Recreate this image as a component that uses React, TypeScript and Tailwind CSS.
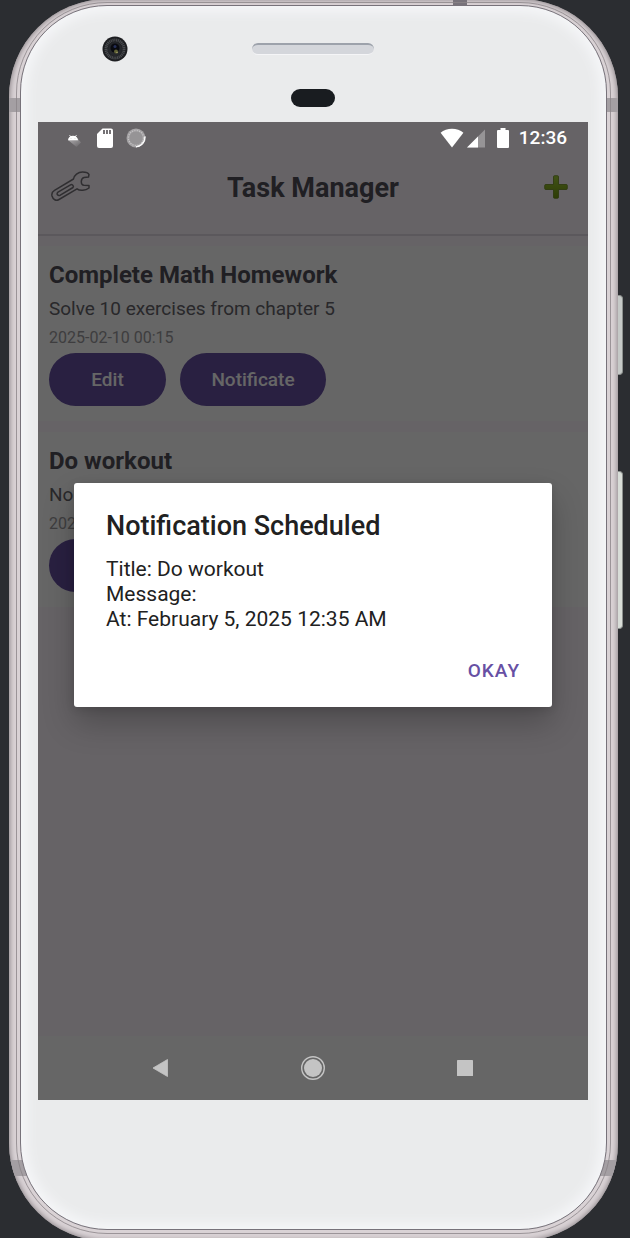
import React from "react";

type Task = { title: string; description: string; due: string };

const tasks: Task[] = [
  { title: "Complete Math Homework", description: "Solve 10 exercises from chapter 5", due: "2025-02-10 00:15" },
  { title: "Do workout", description: "No description", due: "2025-02-05 00:35" },
];

function Camera() {
  return (
    <svg viewBox="0 0 26 26" className="size-[26px]" aria-hidden="true">
      <circle cx="13" cy="13" r="12.5" fill="#1d1e21" />
      <circle cx="13" cy="13" r="9" fill="none" stroke="#4a4c50" strokeWidth="3" strokeDasharray="1.2 0.6" />
      <circle cx="13" cy="13" r="7.2" fill="#25272b" />
      <circle cx="13" cy="12" r="4.5" fill="#090a10" />
      <circle cx="13" cy="10.5" r="1.5" fill="#26305a" />
      <circle cx="14" cy="15.5" r="2" fill="#5f6035" />
      <circle cx="15" cy="16.5" r="0.8" fill="#a5a06a" />
    </svg>
  );
}

function StatusBar() {
  return (
    <div className="relative z-20 flex h-8 items-center justify-between pl-7 pr-[21px] text-white">
      <div className="flex items-center gap-4">
        <svg viewBox="0 0 15 20" className="h-5 w-[15px]" aria-hidden="true">
          <defs>
            <linearGradient id="robotShade" x1="0" y1="0" x2="1" y2="1">
              <stop offset="0" stopColor="#b0aeb0" />
              <stop offset="1" stopColor="#666366" />
            </linearGradient>
          </defs>
          <path d="M2 12L12 11L15 14.500L10.500 19Z" fill="url(#robotShade)" />
          <path d="M2 12.300a5 4.600 0 0 1 10 0Z" fill="#fff" />
          <path d="M3.500 7l1.300 2M10.500 7L9.200 9" stroke="#fff" strokeWidth="0.8" />
          <circle cx="5" cy="10.6" r="0.4" fill="#999" />
          <circle cx="9" cy="10.6" r="0.4" fill="#999" />
        </svg>
        <svg viewBox="0 0 16 20" className="h-5 w-4" aria-hidden="true">
          <path d="M5.5 0.5H14a2 2 0 0 1 2 2V18a2 2 0 0 1-2 2H2a2 2 0 0 1-2-2V6Z" fill="#fff" />
          <path d="M7 2v4M10 2v4M13 2v4" stroke="#666366" strokeWidth="1.8" />
        </svg>
        <svg viewBox="0 0 20 20" className="-ml-[3px] size-5" aria-hidden="true">
          <circle cx="10" cy="10" r="9.5" fill="#a5a3a5" />
          <path d="M19 8.500a9.200 9.200 0 0 1-9 10.400 12 12 0 0 0 9-10.400Z" fill="#fff" stroke="#fff" strokeWidth="1" />
          <circle cx="10" cy="10" r="7.5" fill="none" stroke="#cccacc" strokeWidth="1.4" strokeDasharray="0.8 1.6" />
          <circle cx="10" cy="10" r="6.6" fill="#969496" />
        </svg>
      </div>
      <div className="flex items-center">
        <svg viewBox="0 0 24 20" className="h-5 w-6" aria-hidden="true">
          <path d="M12 19.5L0.6 4.7C3.6 2 7.6 0.7 12 0.7S20.4 2 23.4 4.7Z" fill="#fff" />
        </svg>
        <svg viewBox="0 0 18 20" className="ml-[3px] h-5 w-[18px]" aria-hidden="true">
          <path d="M0 19.5L18 1.5V19.5Z" fill="#969496" />
          <path d="M0 19.5L11 8.5V19.5Z" fill="#fff" />
        </svg>
        <svg viewBox="0 0 12 20" className="ml-3 h-5 w-3" aria-hidden="true">
          <path d="M3.5 0h5v2H11a1 1 0 0 1 1 1V19a1 1 0 0 1-1 1H1a1 1 0 0 1-1-1V3a1 1 0 0 1 1-1h2.5Z" fill="#fff" />
        </svg>
        <span className="ml-2.5 text-[19px] leading-6 font-medium">12:36</span>
      </div>
    </div>
  );
}

function Header() {
  return (
    <header className="flex h-[82px] items-start justify-between border-b-2 border-[#e4dde6] px-[13px] pt-[13px]">
      <button type="button" aria-label="Settings" className="flex h-10 w-12 items-center">
        <svg viewBox="0 0 40 32" className="h-8 w-10" fill="none" stroke="#77747a" strokeWidth="1.5" strokeLinejoin="round" strokeLinecap="round">
          <path d="M22.5 8C23 4.500 27 1 31.5 1 34.5 1 37.500 2.2 38 3.500L37.5 6 33 6.5C30.5 7 30.5 8.5 30.3 10.5 30.3 13 31 14.2 33 14.3L38 14.4 38 17C34.5 19.5 29 20.3 26 17.8L8 28.5C5 30.3 2 28.5 1 25 0.3 22 1 20.800 3.5 19.3Z" />
          <path d="M7 21.2L19.5 13.8C21 13 23.3 14.8 22 16.5L9.3 24.2C7 25.3 4.8 23 7 21.2Z" />
        </svg>
      </button>
      <h1 className="pt-[5px] text-[27px] leading-8 font-bold text-[#504f57]">Task Manager</h1>
      <button type="button" aria-label="Add task" className="flex h-10 w-12 items-center justify-end pr-[7px]">
        <svg viewBox="0 0 24 24" className="size-6">
          <defs>
            <linearGradient id="plusFill" x1="0" y1="0" x2="0" y2="1">
              <stop offset="0" stopColor="#a3cf3a" />
              <stop offset="1" stopColor="#72980f" />
            </linearGradient>
          </defs>
          <path d="M10.500 0.700h3a1 1 0 0 1 1 1V9.500h7.800a1 1 0 0 1 1 1v3a1 1 0 0 1-1 1H14.500v7.800a1 1 0 0 1-1 1h-3a1 1 0 0 1-1-1V14.500H1.700a1 1 0 0 1-1-1v-3a1 1 0 0 1 1-1H9.500V1.700a1 1 0 0 1 1-1Z" fill="url(#plusFill)" stroke="#6c8c1e" strokeWidth="0.8" />
        </svg>
      </button>
    </header>
  );
}

function TaskCard({ task }: { task: Task }) {
  return (
    <li className="bg-white px-[11px] pt-3 pb-[15px]">
      <h2 className="text-2xl leading-[34px] font-bold text-[#504f57]">{task.title}</h2>
      <p className="text-[19px] leading-[34px] text-[#66656b]">{task.description}</p>
      <p className="text-base leading-6 text-[#9b9a9d]">{task.due}</p>
      <div className="mt-[3px] flex gap-[14px]">
        <button type="button" className="h-[53px] w-[117px] rounded-[27px] bg-[#6750a4] pt-0.5 text-[19px] font-medium text-white">Edit</button>
        <button type="button" className="h-[53px] w-[146px] rounded-[27px] bg-[#6750a4] pt-0.5 text-[19px] font-medium text-white">Notificate</button>
      </div>
    </li>
  );
}

function NavBar() {
  return (
    <nav className="flex h-16 items-center justify-between bg-white px-[110px]">
      <button type="button" aria-label="Back" className="relative z-20 flex w-6 justify-center">
        <svg viewBox="0 0 24 24" className="size-6"><path d="M5 12L19.500 3.500V20.500Z" fill="#c4c4c4" stroke="#c4c4c4" strokeWidth="0.8" strokeLinejoin="round" /></svg>
      </button>
      <button type="button" aria-label="Home" className="relative z-20 flex w-6 justify-center">
        <svg viewBox="0 0 24 24" className="size-6"><circle cx="12" cy="12" r="11.300" fill="none" stroke="#c4c4c4" strokeWidth="1.400" /><circle cx="12" cy="12" r="9" fill="#c4c4c4" /></svg>
      </button>
      <button type="button" aria-label="Recent apps" className="relative z-20 flex w-6 justify-center">
        <svg viewBox="0 0 24 24" className="size-6"><rect x="3" y="4" width="16" height="16" rx="0.600" fill="#c4c4c4" /></svg>
      </button>
    </nav>
  );
}

function ScheduledDialog() {
  return (
    <div className="absolute inset-0 z-10 flex items-center bg-black/60 px-9 pb-8">
      <div role="alertdialog" aria-labelledby="dialog-title" className="w-full rounded-[3px] bg-white px-8 pt-[25px] pb-[18px] text-[#212121] shadow-[0_16px_32px_rgba(0,0,0,0.24),0_2px_8px_rgba(0,0,0,0.12)]">
        <h2 id="dialog-title" className="text-[27px] leading-9 font-medium">Notification Scheduled</h2>
        <p className="mt-[13px] text-[21px] leading-[25px]">
          Title: Do workout<br />Message:<br />At: February 5, 2025 12:35 AM
        </p>
        <div className="mt-[21px] flex justify-end">
          <button type="button" className="h-9 text-[19px] font-medium tracking-[1px] text-[#6750a4]">OKAY</button>
        </div>
      </div>
    </div>
  );
}

export default function App() {
  return (
    <div className="flex min-h-screen flex-col overflow-hidden bg-[#2b2d31] pr-3 pl-[9px] font-[Roboto,sans-serif]">
      <div className="relative -mt-px -mb-[3px] flex flex-1 flex-col rounded-[98px] bg-[#d9d2d5] p-[7px] shadow-[inset_0_0_5px_1px_#8f888c]">
        <div className="absolute top-[296px] -right-[5px] h-20 w-[5px] rounded-r-sm border border-l-0 border-[#8c908e] bg-[#c5c9c7]" />
        <div className="absolute top-[472px] -right-[5px] h-[158px] w-[5px] rounded-r-sm border border-l-0 border-[#8c908e] bg-[#d8ddd8]" />
        <div className="absolute inset-0 overflow-hidden rounded-[98px]">
          <div className="absolute top-[99px] left-0 h-[14px] w-3 bg-[#a49fa3]" />
          <div className="absolute top-[99px] right-0 h-[14px] w-3 bg-[#a49fa3]" />
          <div className="absolute bottom-[65px] left-0 h-4 w-5 bg-[#a49fa3]" />
          <div className="absolute right-0 bottom-[65px] h-4 w-5 bg-[#a49fa3]" />
          <div className="absolute top-0 right-[151px] h-2 w-[14px] bg-[#77727a]" />
        </div>
        <div className="relative -mt-1 flex flex-1 flex-col rounded-[91px] border border-[#8b8488]/80 p-[3px] pt-0.5">
          <div className="flex flex-1 flex-col rounded-[87px] border border-[#77727a] bg-[#eaebec] pr-[18px] pb-[129px] pl-[17px] shadow-[inset_0_0_12px_6px_#f5f6f8]">
            <div className="flex h-[116px] flex-col items-center pt-[30px]">
              <div className="grid w-full grid-cols-[1fr_122px_1fr] items-center">
                <div className="pl-16"><Camera /></div>
                <div className="h-3 rounded-full border-t-2 border-b border-t-[#9da2ab] border-b-[#f5f5f7] bg-[#d4d6db]" />
              </div>
              <div className="mt-[27px] h-[18px] w-11 rounded-full bg-[#191c20]" />
            </div>
            <main className="relative flex flex-1 flex-col bg-[#fef7ff]">
              <StatusBar />
              <Header />
              <ul className="mt-2.5 flex flex-1 flex-col gap-[11px]">
                {tasks.map((task) => <TaskCard key={task.title} task={task} />)}
              </ul>
              <NavBar />
              <ScheduledDialog />
            </main>
          </div>
        </div>
      </div>
    </div>
  );
}
